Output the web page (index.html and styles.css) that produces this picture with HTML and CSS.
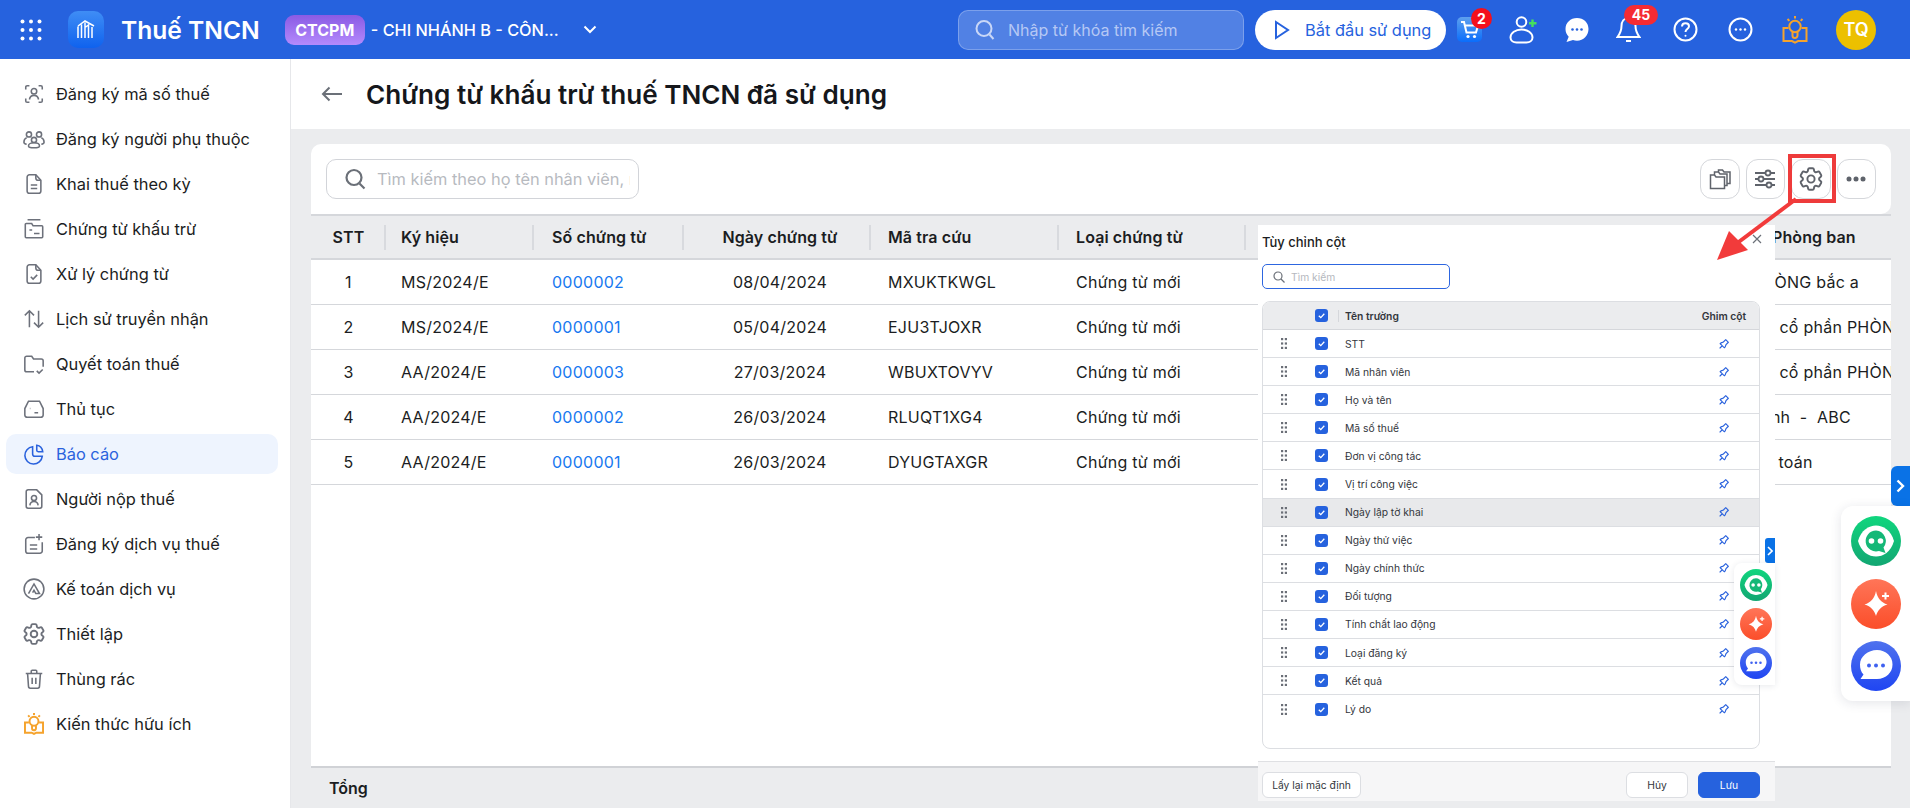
FILE: index.html
```html
<!DOCTYPE html>
<html lang="vi">
<head>
    <meta charset="UTF-8">
    <meta name="viewport" content="width=device-width, initial-scale=1.0">
    <title>Thuế TNCN</title>
    <link rel="stylesheet" href="styles.css">
</head>
<body>

<svg class="defs" width="0" height="0">
    <defs>
        <linearGradient id="gGreen" x1="0" y1="0" x2="0" y2="1"><stop offset="0" stop-color="#10d67e"/><stop offset="1" stop-color="#12a672"/></linearGradient>
        <linearGradient id="gRed" x1="0" y1="0" x2="0" y2="1"><stop offset="0" stop-color="#ff7558"/><stop offset="1" stop-color="#fb4e2a"/></linearGradient>
        <linearGradient id="gBlue" x1="0" y1="0" x2="0" y2="1"><stop offset="0" stop-color="#4f72ee"/><stop offset="1" stop-color="#1f45f2"/></linearGradient>
        <linearGradient id="gCart" x1="0" y1="0" x2="0" y2="1"><stop offset="0" stop-color="#5ea0ee"/><stop offset="1" stop-color="#0a6dfb"/></linearGradient>
        <linearGradient id="gLogo" x1="0" y1="0" x2="0" y2="1"><stop offset="0" stop-color="#3f8df5"/><stop offset="1" stop-color="#0f62ee"/></linearGradient>
    </defs>
    <symbol id="gear" viewBox="2 2 20 20">
        <path d="M9.594 3.94c.09-.542.56-.94 1.11-.94h2.593c.55 0 1.02.398 1.11.94l.213 1.281c.063.374.313.686.645.87.074.04.147.083.22.127.325.196.72.257 1.075.124l1.217-.456a1.125 1.125 0 0 1 1.37.49l1.296 2.247a1.125 1.125 0 0 1-.26 1.431l-1.003.827c-.293.241-.438.613-.43.992a7.723 7.723 0 0 1 0 .255c-.008.378.137.75.43.991l1.004.827c.424.35.534.955.26 1.43l-1.298 2.247a1.125 1.125 0 0 1-1.369.491l-1.217-.456c-.355-.133-.75-.072-1.076.124a6.47 6.47 0 0 1-.22.128c-.331.183-.581.495-.644.869l-.213 1.281c-.09.543-.56.94-1.11.94h-2.594c-.55 0-1.019-.398-1.11-.94l-.213-1.281c-.062-.374-.312-.686-.644-.87a6.52 6.52 0 0 1-.22-.127c-.325-.196-.72-.257-1.076-.124l-1.217.456a1.125 1.125 0 0 1-1.369-.49l-1.297-2.247a1.125 1.125 0 0 1 .26-1.431l1.004-.827c.292-.24.437-.613.43-.991a6.932 6.932 0 0 1 0-.255c.007-.38-.138-.751-.43-.992l-1.004-.827a1.125 1.125 0 0 1-.26-1.43l1.297-2.247a1.125 1.125 0 0 1 1.37-.491l1.216.456c.356.133.751.072 1.076-.124.072-.044.146-.086.22-.128.332-.183.582-.495.644-.869l.214-1.28Z"/>
        <circle cx="12" cy="12" r="3"/>
    </symbol>
    <symbol id="lamp" viewBox="0 0 26 28">
        <path d="M6.500 12H1.500v13h8.500l3 1.600 3-1.600h8.500V12h-5"/>
        <circle cx="13" cy="10.500" r="5.700"/>
        <path d="M10.500 15.500v4a2.500 2.500 0 0 0 5 0v-4"/>
        <path d="M13 0v2.500M5.500 3l1.900 1.900M20.500 3l-1.900 1.900"/>
    </symbol>
    <symbol id="pin" viewBox="0 0 24 24">
        <path d="M15 4.500l-4 4-4 1.500-1.500 1.500 7 7 1.500-1.500 1.500-4 4-4M9 15l-4.500 4.500M14.500 4l5.500 5.500"/>
    </symbol>
    <symbol id="tick" viewBox="0 0 13 13">
        <path d="M3.800 6.700l2 1.900 3.500-3.800"/>
    </symbol>
    <symbol id="drag" viewBox="0 0 6 11">
        <rect x="0" y="0" width="2.200" height="2.200"/><rect x="3.800" y="0" width="2.200" height="2.200"/>
        <rect x="0" y="4.400" width="2.200" height="2.200"/><rect x="3.800" y="4.400" width="2.200" height="2.200"/>
        <rect x="0" y="8.800" width="2.200" height="2.200"/><rect x="3.800" y="8.800" width="2.200" height="2.200"/>
    </symbol>
    <symbol id="botGreen" viewBox="0 0 50 50">
        <circle cx="25" cy="25" r="25" fill="url(#gGreen)"/>
        <path d="M7 25C10 14 18 9.500 25 9.500S40 14 43 25C40 36 32 40.500 25 40.500S10 36 7 25z" fill="#fff"/>
        <path d="M25 14.500a10.500 10.500 0 1 0 3 20.600l6.500 1.900-2-5.500A10.500 10.500 0 0 0 25 14.500z" fill="#14b877"/>
        <circle cx="20.500" cy="25" r="2.800" fill="#fff"/><circle cx="29.500" cy="25" r="2.800" fill="#fff"/>
    </symbol>
    <symbol id="botRed" viewBox="0 0 50 50">
        <circle cx="25" cy="25" r="25" fill="url(#gRed)"/>
        <path d="M25 12c1.500 7.500 5 11.500 11.500 13.500C30 27.500 26.500 31.500 25 37c-1.500-5.500-5-9.500-11.500-11.500C20 23.500 23.500 19.500 25 12z" fill="#fff"/>
        <path d="M33.500 13.500h2v2.500H38v2h-2.500v2.500h-2V18H31v-2h2.500z" fill="#fff"/>
    </symbol>
    <symbol id="botBlue" viewBox="0 0 50 50">
        <circle cx="25" cy="25" r="25" fill="url(#gBlue)"/>
        <path d="M26 9c9 0 15.500 6.500 15.500 14.500S35 38 26 38H9.500l3-4.500C10 31 9 27.500 9 23.500 9 15.500 17 9 26 9z" fill="#fff"/>
        <circle cx="18" cy="24.500" r="2" fill="#3f61f0"/><circle cx="25" cy="24.500" r="2" fill="#3f61f0"/><circle cx="32" cy="24.500" r="2" fill="#3f61f0"/>
    </symbol>
</svg>

<header class="topbar">
    <svg class="apps" width="22" height="22" viewBox="0 0 22 22" fill="#fff">
        <circle cx="2.500" cy="2.500" r="2"/><circle cx="11" cy="2.500" r="2"/><circle cx="19.500" cy="2.500" r="2"/>
        <circle cx="2.500" cy="11" r="2"/><circle cx="11" cy="11" r="2"/><circle cx="19.500" cy="11" r="2"/>
        <circle cx="2.500" cy="19.500" r="2"/><circle cx="11" cy="19.500" r="2"/><circle cx="19.500" cy="19.500" r="2"/>
    </svg>
    <svg class="logo" width="36" height="37" viewBox="0 0 36 37">
        <rect width="36" height="37" rx="10" fill="url(#gLogo)"/>
        <path d="M10 15l7-5 9 5M10 27V15.500M13.500 27V13.500M17 27V11.500M20.500 27V14l-3.500 2.500M24 27V16" fill="none" stroke="#fff" stroke-width="1.500"/>
    </svg>
    <span class="app-name">Thuế TNCN</span>
    <span class="org-badge">CTCPM</span>
    <span class="org-name">- CHI NHÁNH B - CÔN...</span>
    <svg class="org-chevron" width="14" height="9" viewBox="0 0 14 9" fill="none" stroke="#fff" stroke-width="2"><path d="M1.500 1.500L7 7l5.500-5.500"/></svg>

    <div class="top-right">
        <div class="top-search">
            <svg width="22" height="24" viewBox="0 0 22 24" fill="none" stroke="#c9d7f7" stroke-width="2"><circle cx="10" cy="10.500" r="7.500"/><path d="M15.500 16.500l4 4.500"/></svg>
            <span>Nhập từ khóa tìm kiếm</span>
        </div>
        <div class="start-btn">
            <svg width="16" height="20" viewBox="0 0 16 20" fill="none" stroke="#2662de" stroke-width="2"><path d="M2 2v16l12-8z"/></svg>
            <span>Bắt đầu sử dụng</span>
        </div>
        <div class="top-icons">
            <div class="ti ti-cart">
                <svg width="25" height="25" viewBox="0 0 25 25">
                    <rect width="25" height="25" rx="5" fill="url(#gCart)"/>
                    <path d="M4 5h3l2.500 10.500H19L21 8.500H8" fill="none" stroke="#fff" stroke-width="2"/>
                    <circle cx="11" cy="19.500" r="1.600" fill="#fff"/><circle cx="17.500" cy="19.500" r="1.600" fill="#fff"/>
                </svg>
                <span class="badge badge-round">2</span>
            </div>
            <svg class="ti" width="29" height="28" viewBox="0 0 29 28" fill="none" stroke="#fff" stroke-width="2">
                <circle cx="12.500" cy="6" r="4.800"/>
                <path d="M12.500 13.500c-6 0-11 3.500-11 8 0 3.500 3 5 6 5h10c3 0 6-1.500 6-5 0-4.500-5-8-11-8z"/>
                <path d="M23.500 3.500v7.500M20 7.250h7.500" stroke="#46e05c" stroke-width="2.400"/>
            </svg>
            <svg class="ti" width="24" height="26" viewBox="0 0 24 26">
                <path d="M12 1C5.500 1 .5 5.700.5 12c0 3 1.200 5.700 3.200 7.700L1.500 25l6.500-2c1.300.4 2.600.7 4 .7 6.500 0 11.500-5.200 11.500-11.700S18.500 1 12 1z" fill="#fff"/>
                <circle cx="7.500" cy="12.500" r="1.300" fill="#2662de"/><circle cx="12" cy="12.500" r="1.300" fill="#2662de"/><circle cx="16.500" cy="12.500" r="1.300" fill="#2662de"/>
            </svg>
            <div class="ti ti-bell">
                <svg width="25" height="28" viewBox="0 0 25 28" fill="none" stroke="#fff" stroke-width="2">
                    <path d="M12.500 2C8 2 5.500 5.500 5.500 10c0 5-1 7-4 11h22c-3-4-4-6-4-11 0-4.500-2.500-8-7-8z"/><path d="M10 25h5"/>
                </svg>
                <span class="badge badge-pill">45</span>
            </div>
            <svg class="ti ti-help" width="25" height="25" viewBox="0 0 25 25" fill="none" stroke="#fff" stroke-width="2">
                <circle cx="12.500" cy="12.500" r="11"/>
                <path d="M9 9.500c0-2 1.500-3.300 3.500-3.300s3.500 1.300 3.500 3.100c0 2.800-3.500 2.800-3.500 5.700"/>
                <circle cx="12.500" cy="18.800" r="1" fill="#fff" stroke="none"/>
            </svg>
            <svg class="ti ti-more" width="25" height="25" viewBox="0 0 25 25" fill="none" stroke="#fff" stroke-width="2">
                <circle cx="12.500" cy="12.500" r="11"/>
                <g fill="#fff" stroke="none"><circle cx="8" cy="12.500" r="1.200"/><circle cx="12.500" cy="12.500" r="1.200"/><circle cx="17" cy="12.500" r="1.200"/></g>
            </svg>
            <svg class="ti ti-lamp ic-lamp" width="26" height="28"><use href="#lamp"/></svg>
            <span class="avatar">TQ</span>
        </div>
    </div>
</header>

<div class="layout">
    <nav class="sidebar">
        <a class="nav-item">
            <svg class="nav-ic" viewBox="0 0 24 24"><path d="M3 7V4.500A1.500 1.500 0 0 1 4.500 3H7M17 3h2.500A1.500 1.500 0 0 1 21 4.500V7M3 17v2.500A1.500 1.500 0 0 0 4.500 21H7M17 21h2.500a1.500 1.500 0 0 0 1.500-1.500V17"/><circle cx="12" cy="9" r="3"/><path d="M7 18c.5-3 2.500-4.500 5-4.500s4.500 1.500 5 4.500"/></svg>
            <span>Đăng ký mã số thuế</span>
        </a>
        <a class="nav-item">
            <svg class="nav-ic" viewBox="0 0 24 24"><circle cx="6.500" cy="7" r="2.800"/><circle cx="17.500" cy="7" r="2.800"/><circle cx="12" cy="13" r="2.800"/><path d="M4 10.500C2 11.500 1 13.500 1 15.500c0 1.500 1.500 2 3 2.200M20 10.500c2 1 3 3 3 5 0 1.500-1.500 2-3 2.200M12 16c-3.500 0-6 1.500-6 3.500 0 1.500 3 2 6 2s6-.5 6-2c0-2-2.500-3.500-6-3.500z"/></svg>
            <span>Đăng ký người phụ thuộc</span>
        </a>
        <a class="nav-item">
            <svg class="nav-ic" viewBox="0 0 24 24"><path d="M14 2H7a2.500 2.500 0 0 0-2.500 2.500v15A2.500 2.500 0 0 0 7 22h10a2.500 2.500 0 0 0 2.500-2.500V8z"/><path d="M14 2v3.500A2.500 2.500 0 0 0 16.500 8h3M8.500 13h7M8.500 17h7"/></svg>
            <span>Khai thuế theo kỳ</span>
        </a>
        <a class="nav-item">
            <svg class="nav-ic" viewBox="0 0 24 24"><path d="M5 2h14M3.500 21.500h17a1 1 0 0 0 1-1V9.500a1 1 0 0 0-1-1H11L9.500 6H3.500a1 1 0 0 0-1 1v13.500a1 1 0 0 0 1 1z"/><path d="M7 13h3M12 17h6"/></svg>
            <span>Chứng từ khấu trừ</span>
        </a>
        <a class="nav-item">
            <svg class="nav-ic" viewBox="0 0 24 24"><path d="M14 2H7a2.500 2.500 0 0 0-2.500 2.500v15A2.500 2.500 0 0 0 7 22h10a2.500 2.500 0 0 0 2.500-2.500V8z"/><path d="M14 2v3.500A2.500 2.500 0 0 0 16.500 8h3M8.500 15l2.500 2.500 4.500-4.500"/></svg>
            <span>Xử lý chứng từ</span>
        </a>
        <a class="nav-item">
            <svg class="nav-ic" viewBox="0 0 24 24"><path d="M7 21V3M2 8l5-5 5 5M17 3v18M12 16l5 5 5-5"/></svg>
            <span>Lịch sử truyền nhận</span>
        </a>
        <a class="nav-item">
            <svg class="nav-ic" viewBox="0 0 24 24"><path d="M12 20.500H4a2 2 0 0 1-2-2v-13a2 2 0 0 1 2-2h5.500l2 3H20a2 2 0 0 1 2 2V15M15 19.500l2.500 2.500 4-4"/></svg>
            <span>Quyết toán thuế</span>
        </a>
        <a class="nav-item">
            <svg class="nav-ic" viewBox="0 0 24 24"><path d="M6 3.500h12l4 8v7a2.500 2.500 0 0 1-2.500 2.500h-15A2.500 2.500 0 0 1 2 18.500v-7z"/><path d="M7.500 11.500h.5M12.500 16h4"/></svg>
            <span>Thủ tục</span>
        </a>
        <a class="nav-item active">
            <svg class="nav-ic" viewBox="0 0 24 24"><path d="M10.500 4A9.500 9.500 0 1 0 21 14.500h-8a2.500 2.500 0 0 1-2.500-2.500z"/><path d="M15 2.500c3.500.5 6 3 6.500 7h-5a1.500 1.500 0 0 1-1.500-1.500z"/></svg>
            <span>Báo cáo</span>
        </a>
        <a class="nav-item">
            <svg class="nav-ic" viewBox="0 0 24 24"><path d="M15 2H5.500A2 2 0 0 0 3.500 4v16a2 2 0 0 0 2 2h13a2 2 0 0 0 2-2V7.500z"/><circle cx="12" cy="11" r="2.800"/><path d="M7.500 19c.3-2.800 2.200-4.300 4.500-4.300s4.200 1.500 4.500 4.300"/></svg>
            <span>Người nộp thuế</span>
        </a>
        <a class="nav-item">
            <svg class="nav-ic" viewBox="0 0 24 24"><path d="M13 5H5.500A2.500 2.500 0 0 0 3 7.500V19.500A2.500 2.500 0 0 0 5.500 22h13a2.500 2.500 0 0 0 2.500-2.500V10M17.500 1v7M14 4.500h7M7.500 13h8M7.500 17.500h8"/></svg>
            <span>Đăng ký dịch vụ thuế</span>
        </a>
        <a class="nav-item">
            <svg class="nav-ic" viewBox="0 0 24 24"><circle cx="12" cy="12" r="10.800"/><path d="M6 17L12 6.500 18 17h-4l-2-3.500-1.500 2.500"/></svg>
            <span>Kế toán dịch vụ</span>
        </a>
        <a class="nav-item">
            <svg class="nav-ic" viewBox="0 0 24 24"><use href="#gear"/></svg>
            <span>Thiết lập</span>
        </a>
        <a class="nav-item">
            <svg class="nav-ic" viewBox="0 0 24 24"><path d="M3 6h18M9 6V3.500A1 1 0 0 1 10 2.500h4a1 1 0 0 1 1 1V6M5 6l1 14a2 2 0 0 0 2 2h8a2 2 0 0 0 2-2l1-14M10 10.500v7M14 10.500v7"/></svg>
            <span>Thùng rác</span>
        </a>
        <a class="nav-item">
            <svg class="nav-ic ic-lamp ic-lamp-nav" viewBox="0 0 26 28"><use href="#lamp"/></svg>
            <span>Kiến thức hữu ích</span>
        </a>
    </nav>

    <main class="main">
        <div class="page-title">
            <svg width="22" height="16" viewBox="0 0 22 16" fill="none" stroke="#6b7078" stroke-width="2"><path d="M21 8H2M8.500 1.500L2 8l6.500 6.500"/></svg>
            <h1>Chứng từ khấu trừ thuế TNCN đã sử dụng</h1>
        </div>

        <section class="panel">
            <div class="toolbar">
                <div class="tb-search">
                    <svg width="21" height="22" viewBox="0 0 21 22" fill="none" stroke="#6b7078" stroke-width="2.200"><circle cx="9" cy="9.500" r="7.500"/><path d="M14.500 15.500l5 5"/></svg>
                    <span>Tìm kiếm theo họ tên nhân viên, mã số thuế</span>
                </div>
                <div class="tb-btns">
                    <button class="tb-btn"><svg width="24" height="24" viewBox="0 0 24 24" fill="none" stroke="#5f636b" stroke-width="1.500"><path d="M2.500 8h4l1.500 2h8.500v11.500h-14zM6.500 8V5h4l1.500 2h7v11.500h-2.500M10.500 5V3h4l1.500 2h6v11.500h-3"/></svg></button>
                    <button class="tb-btn"><svg width="24" height="24" viewBox="0 0 24 24" fill="none" stroke="#5f636b" stroke-width="1.800"><path d="M2 6h10M18 6h4M2 12h3M11 12h11M2 18h11M19 18h3"/><circle cx="15" cy="6" r="2.500"/><circle cx="8" cy="12" r="2.500"/><circle cx="16" cy="18" r="2.500"/></svg></button>
                    <button class="tb-btn"><svg class="ic-gear" width="24" height="24"><use href="#gear"/></svg></button>
                    <button class="tb-btn"><svg width="20" height="6" viewBox="0 0 20 6" fill="#5f636b"><circle cx="3" cy="3" r="2.500"/><circle cx="10" cy="3" r="2.500"/><circle cx="17" cy="3" r="2.500"/></svg></button>
                </div>
            </div>

            <div class="table-wrap">
                <table class="tbl">
                    <colgroup>
                        <col class="c1"><col class="c2"><col class="c3"><col class="c4"><col class="c5"><col class="c6"><col class="c7"><col class="c8"><col class="c9">
                    </colgroup>
                    <thead>
                        <tr>
                            <th class="center">STT</th><th class="kh">Ký hiệu</th><th class="so">Số chứng từ</th><th class="center ngay">Ngày chứng từ</th><th>Mã tra cứu</th><th>Loại chứng từ</th><th></th><th></th><th class="pb">Phòng ban</th>
                        </tr>
                    </thead>
                    <tbody>
                        <tr><td class="center">1</td><td class="kh">MS/2024/E</td><td class="so"><a class="link">0000002</a></td><td class="center ngay">08/04/2024</td><td>MXUKTKWGL</td><td>Chứng từ mới</td><td></td><td></td><td>Nhóm PHÒNG bắc a</td></tr>
                        <tr><td class="center">2</td><td class="kh">MS/2024/E</td><td class="so"><a class="link">0000001</a></td><td class="center ngay">05/04/2024</td><td>EJU3TJOXR</td><td>Chứng từ mới</td><td></td><td></td><td>- Công ty cổ phần PHÒNG HÀNH CHÍNH</td></tr>
                        <tr><td class="center">3</td><td class="kh">AA/2024/E</td><td class="so"><a class="link">0000003</a></td><td class="center ngay">27/03/2024</td><td>WBUXTOVYV</td><td>Chứng từ mới</td><td></td><td></td><td>- Công ty cổ phần PHÒNG HÀNH CHÍNH</td></tr>
                        <tr><td class="center">4</td><td class="kh">AA/2024/E</td><td class="so"><a class="link">0000002</a></td><td class="center ngay">26/03/2024</td><td>RLUQT1XG4</td><td>Chứng từ mới</td><td></td><td></td><td>Phòng Kinh&nbsp; -&nbsp; ABC</td></tr>
                        <tr><td class="center">5</td><td class="kh">AA/2024/E</td><td class="so"><a class="link">0000001</a></td><td class="center ngay">26/03/2024</td><td>DYUGTAXGR</td><td>Chứng từ mới</td><td></td><td></td><td>Phòng kế toán</td></tr>
                    </tbody>
                </table>
            </div>

            <div class="table-foot">Tổng</div>
        </section>
    </main>
</div>

<!-- popup tuy chinh cot -->
<div class="modal">
    <div class="modal-head">
        <span>Tùy chỉnh cột</span>
        <svg class="modal-x" width="10" height="10" viewBox="0 0 10 10" fill="none" stroke="#6b7078" stroke-width="1.200"><path d="M1 1l8 8M9 1L1 9"/></svg>
    </div>
    <div class="modal-search">
        <svg width="12" height="12" viewBox="0 0 12 12" fill="none" stroke="#6b7078" stroke-width="1.200"><circle cx="5" cy="5" r="4"/><path d="M8 8l3.500 3.500"/></svg>
        <span>Tìm kiếm</span>
    </div>
    <div class="col-list">
        <div class="col-row col-head">
            <span></span>
            <span class="chk"><svg width="13" height="13"><use href="#tick"/></svg></span>
            <span class="col-name">Tên trường</span>
            <span class="col-pin">Ghim cột</span>
        </div>
        <div class="col-row"><svg class="drag" width="6" height="11"><use href="#drag"/></svg><span class="chk"><svg width="13" height="13"><use href="#tick"/></svg></span><span class="col-name">STT</span><span class="col-pin"><svg class="pin" width="14" height="14"><use href="#pin"/></svg></span></div>
        <div class="col-row"><svg class="drag" width="6" height="11"><use href="#drag"/></svg><span class="chk"><svg width="13" height="13"><use href="#tick"/></svg></span><span class="col-name">Mã nhân viên</span><span class="col-pin"><svg class="pin" width="14" height="14"><use href="#pin"/></svg></span></div>
        <div class="col-row"><svg class="drag" width="6" height="11"><use href="#drag"/></svg><span class="chk"><svg width="13" height="13"><use href="#tick"/></svg></span><span class="col-name">Họ và tên</span><span class="col-pin"><svg class="pin" width="14" height="14"><use href="#pin"/></svg></span></div>
        <div class="col-row"><svg class="drag" width="6" height="11"><use href="#drag"/></svg><span class="chk"><svg width="13" height="13"><use href="#tick"/></svg></span><span class="col-name">Mã số thuế</span><span class="col-pin"><svg class="pin" width="14" height="14"><use href="#pin"/></svg></span></div>
        <div class="col-row"><svg class="drag" width="6" height="11"><use href="#drag"/></svg><span class="chk"><svg width="13" height="13"><use href="#tick"/></svg></span><span class="col-name">Đơn vị công tác</span><span class="col-pin"><svg class="pin" width="14" height="14"><use href="#pin"/></svg></span></div>
        <div class="col-row"><svg class="drag" width="6" height="11"><use href="#drag"/></svg><span class="chk"><svg width="13" height="13"><use href="#tick"/></svg></span><span class="col-name">Vị trí công việc</span><span class="col-pin"><svg class="pin" width="14" height="14"><use href="#pin"/></svg></span></div>
        <div class="col-row hover"><svg class="drag" width="6" height="11"><use href="#drag"/></svg><span class="chk"><svg width="13" height="13"><use href="#tick"/></svg></span><span class="col-name">Ngày lập tờ khai</span><span class="col-pin"><svg class="pin" width="14" height="14"><use href="#pin"/></svg></span></div>
        <div class="col-row"><svg class="drag" width="6" height="11"><use href="#drag"/></svg><span class="chk"><svg width="13" height="13"><use href="#tick"/></svg></span><span class="col-name">Ngày thử việc</span><span class="col-pin"><svg class="pin" width="14" height="14"><use href="#pin"/></svg></span></div>
        <div class="col-row"><svg class="drag" width="6" height="11"><use href="#drag"/></svg><span class="chk"><svg width="13" height="13"><use href="#tick"/></svg></span><span class="col-name">Ngày chính thức</span><span class="col-pin"><svg class="pin" width="14" height="14"><use href="#pin"/></svg></span></div>
        <div class="col-row"><svg class="drag" width="6" height="11"><use href="#drag"/></svg><span class="chk"><svg width="13" height="13"><use href="#tick"/></svg></span><span class="col-name">Đối tượng</span><span class="col-pin"><svg class="pin" width="14" height="14"><use href="#pin"/></svg></span></div>
        <div class="col-row"><svg class="drag" width="6" height="11"><use href="#drag"/></svg><span class="chk"><svg width="13" height="13"><use href="#tick"/></svg></span><span class="col-name">Tính chất lao động</span><span class="col-pin"><svg class="pin" width="14" height="14"><use href="#pin"/></svg></span></div>
        <div class="col-row"><svg class="drag" width="6" height="11"><use href="#drag"/></svg><span class="chk"><svg width="13" height="13"><use href="#tick"/></svg></span><span class="col-name">Loại đăng ký</span><span class="col-pin"><svg class="pin" width="14" height="14"><use href="#pin"/></svg></span></div>
        <div class="col-row"><svg class="drag" width="6" height="11"><use href="#drag"/></svg><span class="chk"><svg width="13" height="13"><use href="#tick"/></svg></span><span class="col-name">Kết quả</span><span class="col-pin"><svg class="pin" width="14" height="14"><use href="#pin"/></svg></span></div>
        <div class="col-row last"><svg class="drag" width="6" height="11"><use href="#drag"/></svg><span class="chk"><svg width="13" height="13"><use href="#tick"/></svg></span><span class="col-name">Lý do</span><span class="col-pin"><svg class="pin" width="14" height="14"><use href="#pin"/></svg></span></div>
    </div>
    <div class="modal-foot">
        <button class="m-btn">Lấy lại mặc định</button>
        <button class="m-btn m-cancel">Hủy</button>
        <button class="m-btn m-save">Lưu</button>
    </div>

    <div class="side-tab side-tab-sm"><svg width="6" height="10" viewBox="0 0 6 10" fill="none" stroke="#fff" stroke-width="1.600"><path d="M1 1l4 4-4 4"/></svg></div>
    <div class="side-dock side-dock-sm">
        <svg width="32" height="32"><use href="#botGreen"/></svg>
        <svg width="32" height="32"><use href="#botRed"/></svg>
        <svg width="32" height="32"><use href="#botBlue"/></svg>
    </div>
</div>

<div class="side-tab side-tab-lg"><svg width="9" height="14" viewBox="0 0 9 14" fill="none" stroke="#fff" stroke-width="2.400"><path d="M1.500 1.500L7 7l-5.500 5.500"/></svg></div>
<div class="side-dock side-dock-lg">
    <svg width="50" height="50"><use href="#botGreen"/></svg>
    <svg width="50" height="50"><use href="#botRed"/></svg>
    <svg width="50" height="50"><use href="#botBlue"/></svg>
</div>

<!-- khung do va mui ten chu thich -->
<div class="mark-box"></div>
<svg class="mark-arrow" width="90" height="70" viewBox="0 0 90 70">
    <path d="M82 3L22 48" stroke="#f23b3b" stroke-width="4" fill="none"/>
    <path d="M3 64L15 35 34 54z" fill="#f23b3b"/>
</svg>

</body>
</html>
```

FILE: styles.css
```css
* {
    box-sizing: border-box;
}
html, body {
    margin: 0;
    height: 100%;
}
body {
    position: relative;
    width: 1910px;
    height: 808px;
    overflow: hidden;
    font-family: "Inter", "Noto Sans", sans-serif;
    font-size: 16px;
    color: #1b1d22;
    background: #ebecee;
}
.defs {
    position: absolute;
}
button {
    font-family: inherit;
}

/* header */
.topbar {
    height: 59px;
    display: flex;
    align-items: center;
    padding-left: 20px;
    background: #2662de;
    color: #fff;
}
.apps {
    flex: none;
}
.logo {
    flex: none;
    margin-left: 26px;
}
.app-name {
    margin-left: 17px;
    font-size: 24.600px;
    font-weight: 600;
    white-space: nowrap;
}
.org-badge {
    margin-left: 25px;
    width: 80px;
    height: 30px;
    line-height: 30px;
    text-align: center;
    border-radius: 9px;
    font-size: 16px;
    font-weight: 700;
    background: linear-gradient(#8a5be4, #b48afc);
}
.org-name {
    margin-left: 6px;
    font-size: 16.300px;
    font-weight: 500;
    white-space: nowrap;
}
.org-chevron {
    margin-left: 24px;
}
.top-right {
    margin-left: auto;
    display: flex;
    align-items: center;
    padding-right: 34px;
}
.top-search {
    width: 286px;
    height: 40px;
    display: flex;
    align-items: center;
    gap: 12px;
    padding-left: 15px;
    border: 1px solid rgba(255, 255, 255, 0.25);
    border-radius: 10px;
    background: rgba(255, 255, 255, 0.2);
    color: #b6c8f4;
}
.start-btn {
    width: 191px;
    height: 40px;
    margin-left: 11px;
    display: flex;
    align-items: center;
    gap: 15px;
    padding-left: 19px;
    border-radius: 20px;
    background: #fff;
    color: #2662de;
    font-size: 16.400px;
    white-space: nowrap;
}
.top-icons {
    display: flex;
    align-items: center;
    gap: 27px;
    margin-left: 11px;
}
.ti {
    position: relative;
    flex: none;
    display: block;
}
.ti svg {
    display: block;
}
.ti-help {
    margin-left: 5px;
}
.ti-more {
    margin-left: 3px;
}
.ti-lamp {
    margin-left: 2px;
}
.badge {
    position: absolute;
    background: #f4101c;
    color: #fff;
    font-weight: 700;
    text-align: center;
}
.badge-round {
    top: -9px;
    right: -10px;
    width: 21px;
    height: 21px;
    line-height: 21px;
    border-radius: 50%;
    font-size: 14px;
}
.badge-pill {
    top: -11px;
    left: 8px;
    width: 34px;
    height: 20px;
    line-height: 20px;
    border-radius: 10px;
    font-size: 14px;
    background: #f52b33;
}
.ic-lamp {
    fill: none;
    stroke: #f5a32d;
    stroke-width: 2;
}
.avatar {
    width: 40px;
    height: 40px;
    margin-left: 1px;
    line-height: 40px;
    text-align: center;
    border-radius: 50%;
    background: #ecc000;
    font-size: 18px;
    font-weight: 600;
}

/* body */
.layout {
    display: flex;
    height: 749px;
}
.sidebar {
    width: 291px;
    flex: none;
    display: flex;
    flex-direction: column;
    gap: 5px;
    padding: 15px 12px 0 6px;
    background: #fff;
    border-right: 1px solid #e6e7ea;
}
.nav-item {
    height: 40px;
    display: flex;
    align-items: center;
    gap: 11px;
    padding-left: 17px;
    border-radius: 10px;
    font-size: 16.400px;
    color: #1b1d22;
    white-space: nowrap;
}
.nav-ic {
    width: 22px;
    height: 22px;
    flex: none;
    fill: none;
    stroke: #6d717b;
    stroke-width: 1.700;
}
.nav-item.active {
    background: #eef4fe;
    color: #2a62dd;
}
.nav-item.active .nav-ic {
    stroke: #2a62dd;
}
.ic-lamp-nav {
    stroke: #f5a32d;
    stroke-width: 2.500;
}

.main {
    flex: 1;
    min-width: 0;
    display: flex;
    flex-direction: column;
}
.page-title {
    height: 70px;
    flex: none;
    display: flex;
    align-items: center;
    gap: 23px;
    padding-left: 30px;
    background: #fff;
}
.page-title h1 {
    margin: 0;
    font-size: 26.100px;
    font-weight: 600;
    color: #15171b;
}
.panel {
    flex: 1;
    min-height: 0;
    margin: 15px 19px 0 20px;
    display: flex;
    flex-direction: column;
}
.toolbar {
    height: 70px;
    flex: none;
    display: flex;
    align-items: center;
    justify-content: space-between;
    padding: 0 15px 0 15px;
    background: #fff;
    border-radius: 10px 10px 10px 0;
}
.tb-search {
    width: 313px;
    height: 40px;
    display: flex;
    align-items: center;
    gap: 11px;
    padding-left: 18px;
    padding-right: 8px;
    border: 1px solid #d2d4d9;
    border-radius: 10px;
    color: #b7babf;
    font-size: 16.400px;
    white-space: nowrap;
}
.tb-search svg {
    flex: none;
}
.tb-search span {
    flex: 1;
    min-width: 0;
    overflow: hidden;
}
.tb-btns {
    display: flex;
    gap: 6px;
}
.tb-btn {
    width: 39.500px;
    height: 40px;
    padding: 0;
    display: flex;
    align-items: center;
    justify-content: center;
    background: #fff;
    border: 1px solid #d5d7db;
    border-radius: 12px;
}
.ic-gear {
    fill: none;
    stroke: #5f636b;
    stroke-width: 1.600;
}

/* table */
.table-wrap {
    flex: 1;
    min-height: 0;
    background: #fff;
}
.tbl {
    width: 1580px;
    table-layout: fixed;
    border-collapse: separate;
    border-spacing: 0;
}
.c1 { width: 75px; }
.c2 { width: 148px; }
.c3 { width: 150px; }
.c4 { width: 187px; }
.c5 { width: 188px; }
.c6 { width: 187px; }
.c7 { width: 188px; }
.c8 { width: 250px; }
.c9 { width: 207px; }
.tbl th, .tbl td {
    height: 45px;
    padding: 0 0 0 17px;
    text-align: left;
    white-space: nowrap;
    overflow: hidden;
}
.tbl th {
    position: relative;
    height: 46px;
    font-weight: 600;
    letter-spacing: 0.1px;
    background: #ebecee;
    border-top: 2px solid #d5d7db;
    border-bottom: 2px solid #d5d7db;
}
.tbl th::after {
    content: "";
    position: absolute;
    top: 9px;
    right: 0;
    width: 2px;
    height: 25px;
    background: #d8dade;
}
.tbl th:last-child::after {
    display: none;
}
.tbl td {
    letter-spacing: 0.25px;
    border-bottom: 1px solid #d5d7db;
}
.tbl .center {
    padding-left: 0;
    text-align: center;
}
.tbl .ngay {
    padding-left: 5px;
}
.tbl .kh {
    padding-left: 15px;
}
.tbl .so {
    padding-left: 18px;
}
.tbl .pb {
    padding-left: 88px;
}
.link {
    color: #1878f0;
}
.table-foot {
    height: 42px;
    flex: none;
    display: flex;
    align-items: center;
    padding-left: 18px;
    border-top: 2px solid #d0d2d6;
    font-weight: 600;
}

/* popup */
.modal {
    position: absolute;
    left: 1258px;
    top: 225px;
    width: 517px;
    height: 576px;
    display: flex;
    flex-direction: column;
    background: #fff;
    font-size: 10.300px;
}
.modal-head {
    height: 39px;
    flex: none;
    display: flex;
    align-items: center;
    justify-content: space-between;
    padding: 0 13px 6px 4px;
    font-size: 13px;
    font-weight: 500;
}
.modal-x {
    margin-top: -6px;
}
.modal-search {
    width: 188px;
    height: 25px;
    flex: none;
    margin-left: 4px;
    display: flex;
    align-items: center;
    gap: 6px;
    padding-left: 10px;
    border: 1px solid #2d66e0;
    border-radius: 5px;
    color: #b5b8be;
}
.col-list {
    width: 498px;
    height: 448px;
    flex: none;
    margin: 12px 0 0 4px;
    border: 1px solid #dcdee2;
    border-radius: 8px;
    overflow: hidden;
}
.col-row {
    height: 28.100px;
    display: grid;
    grid-template-columns: 52px 30px 348px 1fr;
    align-items: center;
    border-bottom: 1px solid #dcdee2;
    color: #33363c;
}
.col-row.last {
    border-bottom: none;
}
.col-head {
    height: 28px;
    background: #ebecee;
    font-weight: 600;
    border-bottom: 1px solid #d5d7db;
}
.col-head .col-name {
    border-left: 1px solid #d5d7db;
    margin-left: -7px;
    padding-left: 6px;
}
.drag {
    margin-left: 18px;
    fill: #6b6f77;
}
.chk {
    width: 13px;
    height: 13px;
    border-radius: 3px;
    background: #2662de;
}
.chk svg {
    display: block;
    fill: none;
    stroke: #fff;
    stroke-width: 1.300;
}
.col-row.hover {
    background: #e8e9eb;
}
.col-pin {
    width: 62px;
    text-align: center;
    white-space: nowrap;
}
.pin {
    display: block;
    margin: 0 auto;
    fill: none;
    stroke: #2a62dd;
    stroke-width: 2;
}
.modal-foot {
    flex: 1;
    margin-top: 12px;
    display: flex;
    align-items: flex-start;
    gap: 10px;
    padding: 10px 15px 0 4px;
    background: #f6f6f7;
    border-top: 1px solid #dfe0e3;
}
.m-btn {
    height: 26px;
    padding: 0;
    background: #fff;
    border: 1px solid #dcdee2;
    border-radius: 6px;
    font-size: 10.300px;
    color: #33363c;
}
.m-btn:first-child {
    width: 99px;
    margin-right: auto;
}
.m-cancel, .m-save {
    width: 62px;
}
.m-save {
    background: #2662de;
    border-color: #2662de;
    color: #fff;
}

/* nut noi ben phai */
.side-tab {
    position: absolute;
    display: flex;
    align-items: center;
    justify-content: center;
    background: #0a72e6;
}
.side-tab-lg {
    left: 1891px;
    top: 466px;
    width: 19px;
    height: 40px;
    border-radius: 6px 0 0 6px;
}
.side-tab-sm {
    left: 507px;
    top: 313px;
    width: 10px;
    height: 25px;
    border-radius: 3px 0 0 3px;
}
.side-dock {
    position: absolute;
    display: flex;
    flex-direction: column;
    background: #fff;
    box-shadow: 0 2px 12px rgba(30, 40, 70, 0.12);
}
.side-dock svg {
    display: block;
}
.side-dock-lg {
    left: 1841px;
    top: 506px;
    width: 69px;
    height: 195px;
    gap: 12.500px;
    padding: 10px 0 0 10px;
    border-radius: 12px 0 0 12px;
}
.side-dock-sm {
    left: 476px;
    top: 338px;
    width: 41px;
    height: 122px;
    gap: 7px;
    padding: 6px 0 0 6px;
    border-radius: 8px 0 0 8px;
    box-shadow: 0 1px 6px rgba(30, 40, 70, 0.1);
}

/* chu thich */
.mark-box {
    position: absolute;
    left: 1788px;
    top: 154px;
    width: 48px;
    height: 49px;
    border: 4px solid #ee3b3b;
}
.mark-arrow {
    position: absolute;
    left: 1714px;
    top: 196px;
}
```
